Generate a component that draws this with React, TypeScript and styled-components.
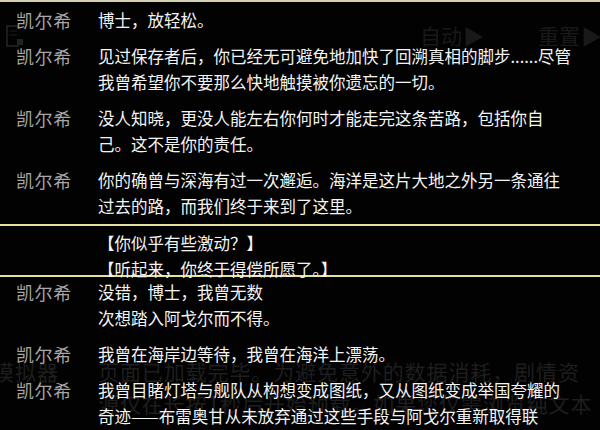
import React from 'react';
import styled, { createGlobalStyle } from 'styled-components';

const GlobalStyle = createGlobalStyle`
  html, body {
    margin: 0;
    padding: 0;
    background: #000;
  }
  body {
    font-family: "Noto Sans CJK SC", "Noto Sans", sans-serif;
  }
`;

const Screen = styled.div`
  position: relative;
  width: 600px;
  height: 430px;
  overflow: hidden;
  background: #020202;
  border-top: 2px solid #d6d0b2;
  box-sizing: border-box;
`;

// faint UI showing through the log overlay
const Ghost = styled.div`
  position: absolute;
  inset: 0;
  pointer-events: none;
  color: #1c1c1c;
  font-size: 21px;
  white-space: nowrap;
`;

const GhostButton = styled.div<{ $left: number }>`
  position: absolute;
  top: 20px;
  left: ${(p) => p.$left}px;
  display: flex;
  align-items: center;
  gap: 1px;
  color: #191919;
  font-size: 21px;
  line-height: 26px;
  white-space: nowrap;
`;

const GhostIcon = styled.svg`
  position: absolute;
  top: 22px;
  left: 5px;
`;

const GhostNotice = styled.div`
  position: absolute;
  top: 353px;
  left: 98px;
  line-height: 32px;
  letter-spacing: 0.9px;
  color: #1e1e1e;
`;

const GhostTitle = styled.div`
  position: absolute;
  top: 353px;
  left: -7px;
  line-height: 32px;
  letter-spacing: 1px;
  color: #1e1e1e;
`;

const Log = styled.div`
  position: relative;
  display: flex;
  flex-direction: column;
  gap: 10px;
  padding-top: 5px;
`;

const Entry = styled.div`
  display: grid;
  grid-template-columns: 98px 1fr;
  font-size: 16.5px;
  line-height: 26px;
`;

const Name = styled.div`
  padding-left: 16px;
  color: #a6a6a6;
  font-size: 18px;
  letter-spacing: 0.6px;
`;

const Lines = styled.div`
  color: #f4f4f4;
  white-space: nowrap;
`;

const Choice = styled.div`
  height: 45px;
  margin: -5px 0 -8px;
  padding: 4px 0 0 98px;
  box-sizing: content-box;
  border-top: 2px solid #e4e09c;
  border-bottom: 2px solid #e4e09c;
  font-size: 16.5px;
  line-height: 26px;
  color: #f4f4f4;
  white-space: nowrap;
`;

type Line = { name: string; lines: string[] };

const before: Line[] = [
  { name: '凯尔希', lines: ['博士，放轻松。'] },
  {
    name: '凯尔希',
    lines: [
      '见过保存者后，你已经无可避免地加快了回溯真相的脚步......尽管',
      '我曾希望你不要那么快地触摸被你遗忘的一切。',
    ],
  },
  {
    name: '凯尔希',
    lines: ['没人知晓，更没人能左右你何时才能走完这条苦路，包括你自', '己。这不是你的责任。'],
  },
  {
    name: '凯尔希',
    lines: ['你的确曾与深海有过一次邂逅。海洋是这片大地之外另一条通往', '过去的路，而我们终于来到了这里。'],
  },
];

const after: Line[] = [
  { name: '凯尔希', lines: ['没错，博士，我曾无数', '次想踏入阿戈尔而不得。'] },
  { name: '凯尔希', lines: ['我曾在海岸边等待，我曾在海洋上漂荡。'] },
  {
    name: '凯尔希',
    lines: [
      '我曾目睹灯塔与舰队从构想变成图纸，又从图纸变成举国夸耀的',
      '奇迹——布雷奥甘从未放弃通过这些手段与阿戈尔重新取得联',
    ],
  },
];

const renderEntry = (e: Line, i: number) => (
  <Entry key={i}>
    <Name>{e.name}</Name>
    <Lines>
      {e.lines.map((l, j) => (
        <div key={j}>{l}</div>
      ))}
    </Lines>
  </Entry>
);

export default function App() {
  return (
    <>
      <GlobalStyle />
      <Screen>
        <Ghost>
          <GhostIcon width="22" height="24" viewBox="0 0 22 24">
            <path d="M14 2 H2 V22 H14" fill="none" stroke="#262626" strokeWidth="1.5" />
            <path d="M4 7 H12 M4 11 H12" stroke="#1c1c1c" strokeWidth="1.2" />
            <rect x="12" y="15" width="6" height="6" fill="#1c2620" />
          </GhostIcon>
          <GhostButton $left={420}>
            自动<span>▶</span>
          </GhostButton>
          <GhostButton $left={538}>
            重置<span>▶</span>
          </GhostButton>
          <GhostTitle>模拟器</GhostTitle>
          <GhostNotice>
            <div>页面已加载完毕。为避免意外的数据消耗，剧情资</div>
            <div>源仅在长按1秒后开始预载。如果您仅需浏览纯文本</div>
          </GhostNotice>
        </Ghost>
        <Log>
          {before.map(renderEntry)}
          <Choice>
            <div>【你似乎有些激动？】</div>
            <div>【听起来，你终于得偿所愿了。】</div>
          </Choice>
          {after.map(renderEntry)}
        </Log>
      </Screen>
    </>
  );
}
